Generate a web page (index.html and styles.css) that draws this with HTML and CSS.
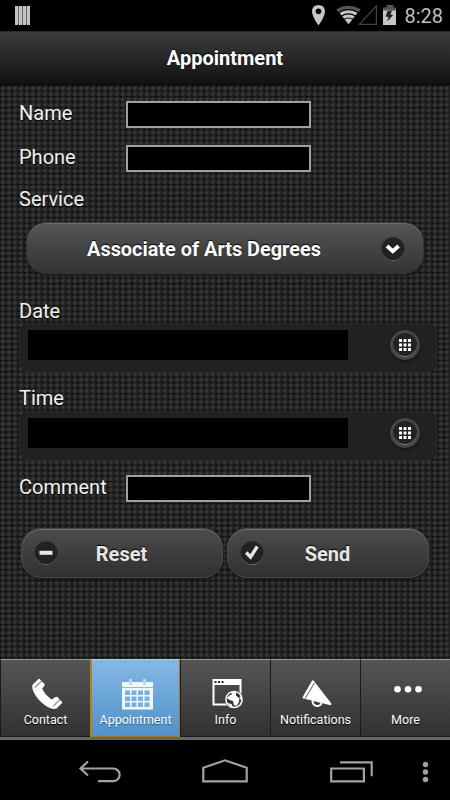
FILE: index.html
```html
<!DOCTYPE html>
<html lang="en">
<head>
  <meta charset="UTF-8">
  <meta name="viewport" content="width=device-width, initial-scale=1.0">
  <title>Appointment</title>
  <link rel="stylesheet" href="styles.css">
</head>
<body>
  <!-- Status bar -->
  <div class="status">
    <svg class="status-left" width="16" height="20" viewBox="0 0 16 20">
      <path fill="#6a6a6a" d="M0 .5h15v18H0z"/>
      <path fill="#c4c4c4" d="M0 0h3v19H0zM4 0h3v19H4zM8 0h3v19H8zM12 0h3v19h-3z"/>
    </svg>
    <svg class="status-icons" width="92" height="22" viewBox="0 0 92 22">
      <path fill="#c6c6c6" fill-rule="evenodd" d="M8.500 0C4.600 0 2 2.800 2 6.500c0 5 6.500 14 6.500 14s6.500-9 6.500-14C15 2.800 12.400 0 8.500 0zm0 3.400a2.800 2.800 0 1 1 0 5.600 2.800 2.800 0 0 1 0-5.600z"/>
      <path fill="#c6c6c6" d="M38.500 19.200 29 7.200q9.500-6 19 0z"/>
      <path fill="#555" d="M26.300 4.200q12.200-6.700 24.400 0l-2.300 3.300q-9.900-6-19.800 0z"/>
      <path fill="none" stroke="#000" stroke-width="1.200" d="M28.500 7.700q10-6 20 0M31.200 11.200q7.300-4.500 14.600 0M33.700 14.500q4.800-3 9.600 0"/>
      <path fill="none" stroke="#444" stroke-width="1.200" d="M66.400 1v18.400H49.300z"/>
      <path fill="#555" d="M76.500 0h7v2.500H86V6H73V2.500h3.500z"/>
      <path fill="#c6c6c6" d="M73 5.500h13V20H73z"/>
      <path fill="#222" d="m77.500 6 4.500-.5-1.500 4 2.700.4-6 6.500 1.300-4.500-3-.5z"/>
    </svg>
    <span class="clock">8:28</span>
  </div>

  <h1 class="header">Appointment</h1>

  <form class="form">
    <div class="row">
      <label for="name">Name</label>
      <input type="text" id="name">
    </div>
    <div class="row">
      <label for="phone">Phone</label>
      <input type="text" id="phone">
    </div>
    <label class="label-service">Service</label>
    <button type="button" class="button select">
      <span>Associate of Arts Degrees</span>
      <svg class="disc" width="24" height="24" viewBox="0 0 24 24">
        <circle cx="12" cy="12.700" r="11.200" fill="#8a8a8a"/>
        <circle cx="12" cy="11.800" r="11.500" fill="#222"/>
        <path d="m6 9 5.800 5.200L17.600 9" fill="none" stroke="#fff" stroke-width="3.800"/>
      </svg>
    </button>

    <label class="label-date">Date</label>
    <div class="picker">
      <input type="text">
      <button type="button" class="grid-button">
        <svg width="12" height="12" viewBox="0 0 12 12"><path fill="#fff" d="M0 0h3v3H0zM4.500 0h3v3h-3zM9 0h3v3H9zM0 4.500h3v3H0zM4.500 4.500h3v3h-3zM9 4.500h3v3H9zM0 9h3v3H0zM4.500 9h3v3h-3zM9 9h3v3H9z"/></svg>
      </button>
    </div>

    <label class="label-time">Time</label>
    <div class="picker">
      <input type="text">
      <button type="button" class="grid-button">
        <svg width="12" height="12" viewBox="0 0 12 12"><path fill="#fff" d="M0 0h3v3H0zM4.500 0h3v3h-3zM9 0h3v3H9zM0 4.500h3v3H0zM4.500 4.500h3v3h-3zM9 4.500h3v3H9zM0 9h3v3H0zM4.500 9h3v3h-3zM9 9h3v3H9z"/></svg>
      </button>
    </div>

    <div class="row row-comment">
      <label for="comment">Comment</label>
      <input type="text" id="comment">
    </div>

    <div class="actions">
      <button type="button" class="button action">
        <svg class="disc" width="24" height="24" viewBox="0 0 24 24">
          <circle cx="12" cy="12.700" r="11.200" fill="#8a8a8a"/>
          <circle cx="12" cy="11.800" r="11.500" fill="#222"/>
          <path fill="#e6e6e6" d="M5.500 9.800h13v4h-13z"/>
        </svg>
        <span>Reset</span>
      </button>
      <button type="button" class="button action">
        <svg class="disc" width="24" height="24" viewBox="0 0 24 24">
          <circle cx="12" cy="12.700" r="11.200" fill="#8a8a8a"/>
          <circle cx="12" cy="11.800" r="11.500" fill="#222"/>
          <path d="m6.200 11.500 4.300 4.500 6.800-10.500" fill="none" stroke="#e6e6e6" stroke-width="3.400"/>
        </svg>
        <span>Send</span>
      </button>
    </div>
  </form>

  <!-- Tabs -->
  <div class="tabs">
    <a class="tab">
      <svg width="34" height="34" viewBox="0 0 34 34">
        <path fill="#fff" d="M10 .5 3.500 6.800C2 11 6.500 19 12.500 24.500S24 32 27.500 30.500l6-6-5.300-5.700c-2 .2-3.500 1.200-5 2.700-4-2-8-6.500-10-11 1.300-1.200 2.300-2.600 2.500-4.300z"/>
        <path fill="none" stroke="#444" d="m12.800 2.800-7 6.700M31 21.500l-6.700 6.700"/>
      </svg>
      <span>Contact</span>
    </a>
    <a class="tab active">
      <svg width="34" height="34" viewBox="0 0 34 34">
        <path fill="#f2f7fc" d="M3 4h31v27.500H3z"/>
        <path fill="#bfdaf0" d="M10 1h3v6h-3zM24 1h3v6h-3z"/>
        <path stroke="#8fbde3" d="M3 9.500h31"/>
        <path fill="#79afdc" d="M6 12.500h5v4.500H6zM12.500 12.500h5v4.500h-5zM19 12.500h5v4.500h-5zM25.500 12.500h5v4.500h-5zM6 18.500h5v4.500H6zM12.500 18.500h5v4.500h-5zM19 18.500h5v4.500h-5zM25.500 18.500h5v4.500h-5zM6 24.500h5v4.500H6zM12.500 24.500h5v4.500h-5zM19 24.500h5v4.500h-5zM25.500 24.500h5v4.500h-5z"/>
      </svg>
      <span>Appointment</span>
    </a>
    <a class="tab">
      <svg width="34" height="34" viewBox="0 0 34 34">
        <path fill="#fff" fill-rule="evenodd" d="M3.500 1h29v26.500h-29zm2 6v18.500h25V7z"/>
        <path fill="#222" d="M5.500 3h2v2h-2zM9 3h2v2H9zM12.500 3h2v2h-2z"/>
        <circle cx="25" cy="21.500" r="9.300" fill="#444"/>
        <circle cx="25" cy="21.500" r="8.100" fill="#333" stroke="#fff" stroke-width="1.500"/>
        <path fill="#fff" d="m17.500 20 3.500-3 2-.5-1-2 3-1 2 1 0 3 3 2.500v4l-2 3.500h-3l-1-4.500-3.500-1zM18.500 25l4 1 1.500 3-2-.5zM31 17l1.500 4-2 1z"/>
      </svg>
      <span>Info</span>
    </a>
    <a class="tab">
      <svg width="34" height="34" viewBox="0 0 34 34">
        <path fill="none" stroke="#fff" stroke-width="2" d="M13.500 22.500c0 7 8.500 7 9 2"/>
        <path fill="#fff" d="M14.500 2.500 32 25c.8 1.500 0 2.500-1.500 2L4.500 20.500c-1-.2-1.200-1-.7-1.800l9.200-16c.4-.7 1-.7 1.500-.2z"/>
        <path stroke="#555" d="m15.500 5-9.500 15.500"/>
      </svg>
      <span>Notifications</span>
    </a>
    <a class="tab">
      <svg width="34" height="34" viewBox="0 0 34 34">
        <g fill="#fff"><circle cx="8.500" cy="11.300" r="3.300"/><circle cx="19" cy="11.300" r="3.300"/><circle cx="29.500" cy="11.300" r="3.300"/></g>
      </svg>
      <span>More</span>
    </a>
  </div>

  <!-- System navigation -->
  <div class="navbar">
    <svg width="450" height="60" viewBox="0 0 450 60">
      <g fill="none" stroke="#a2a2a2" stroke-width="2.200">
        <path d="m88 21.500-7.500 7 7.500 7M80.500 28.500h32.800a6.300 6.300 0 0 1 0 12.700H98"/>
        <path d="M203.300 41.300V27.800l21.700-7.500 21.700 7.500v13.500z"/>
        <path d="M331.200 28.500h32.700v12.800h-32.700zM340 22.300h31.700v14"/>
      </g>
      <g fill="#a2a2a2"><circle cx="425.500" cy="24.500" r="2.700"/><circle cx="425.500" cy="32" r="2.700"/><circle cx="425.500" cy="39.500" r="2.700"/></g>
    </svg>
  </div>
</body>
</html>
```

FILE: styles.css
```css
:root {
  --fg: #f2f2f2;
  --line: #a0a0a0;
  --panel: #222;
}
* { box-sizing: border-box; }
body {
  margin: 0;
  width: 450px;
  height: 800px;
  display: flex;
  flex-direction: column;
  overflow: hidden;
  background: #000;
  color: var(--fg);
  font-family: Roboto, sans-serif;
}
button, input {
  margin: 0;
  padding: 0;
  border: none;
  border-radius: 0;
  font-family: inherit;
  color: inherit;
}
svg { display: block; flex: none; }

.status {
  height: 31px;
  flex: none;
  display: flex;
  align-items: flex-start;
  padding: 5px 7px 0 15px;
}
.status-left { margin-top: 1px; }
.status-icons { margin-left: auto; }
.clock {
  margin-left: 2px;
  color: #bebebe;
  font-size: 20px;
  line-height: 23px;
}

.header {
  margin: 0;
  height: 54px;
  flex: none;
  border-top: 1px solid #2c2c2c;
  border-bottom: 1px solid #080808;
  background: linear-gradient(#3c3c3c, #111);
  color: #fff;
  font-size: 20px;
  font-weight: bold;
  line-height: 52px;
  text-align: center;
  text-shadow: 0 -1px 1px #000;
}

.form {
  flex: 1;
  min-height: 0;
  display: flex;
  flex-direction: column;
  padding: 16px 14px 0 19px;
  background:
    radial-gradient(circle at 45% 60%, #3c3c3c 0, #303030 36%, transparent 68%) 0 0 / 6px 5.500px,
    linear-gradient(135deg, #0a0a0a 15%, #1e1e1e 55%, #161616) 0 0 / 6px 5.500px;
}
.form label {
  font-size: 20px;
  line-height: 24px;
  text-shadow: 0 1px 1px #000;
}
.row {
  height: 27px;
  flex: none;
  display: flex;
  margin-bottom: 17px;
}
.row label { width: 107px; }
.row input {
  width: 185px;
  height: 27px;
  border: 2px solid var(--line);
  background: #000;
}
.label-service { margin-top: -2px; }

.button {
  display: flex;
  align-items: center;
  border: 1px solid #363636;
  border-radius: 20px;
  background: linear-gradient(#555, #333);
  box-shadow: 0 1px 3px #111, inset 0 1px 0 #6c6c6c;
  color: #fff;
  font-size: 20px;
  font-weight: bold;
  text-shadow: 0 -1px 1px #000;
}
.button span { flex: 1; text-align: center; }
.select {
  width: 398px;
  height: 52px;
  flex: none;
  margin: 11px 0 0 7px;
  padding: 2px 18px 0 0;
  font-size: 19.900px;
}

.label-date { margin-top: 25px; }
.label-time { margin-top: 13px; }
.picker {
  width: 418px;
  height: 50px;
  flex: none;
  display: flex;
  align-items: flex-start;
  padding: 6px 16px 0 9px;
  border: 1px solid #272727;
  border-radius: 9px;
  background: var(--panel);
}
.label-time + .picker { margin-top: 1px; }
.picker input {
  width: 320px;
  height: 30px;
  margin-left: -1px;
  background: #000;
}
.grid-button {
  width: 30px;
  height: 30px;
  display: flex;
  align-items: center;
  justify-content: center;
  margin-left: auto;
  border: 3px solid #454545;
  border-radius: 50%;
  background: #222;
  box-shadow: 0 1px 3px #111, inset 0 -1px 0 #888;
}

.row-comment { margin: 14px 0 0; }
.actions {
  display: flex;
  gap: 4px;
  margin: 26px 0 0 2px;
}
.action {
  width: 202px;
  height: 50px;
  border-color: #4a4a4a;
  background: linear-gradient(#4c4c4c, #303030);
  color: #e6e6e6;
  padding: 0 37px 0 12px;
}
.action span { padding-top: 2px; }

.tabs {
  height: 81px;
  flex: none;
  display: grid;
  grid-template-columns: repeat(5, 90px);
  border-bottom: 3px solid #666;
}
.tab {
  display: flex;
  flex-direction: column;
  align-items: center;
  padding-top: 18px;
  border: 1px solid #1b1b1b;
  border-top-color: #999;
  border-right: none;
  background: linear-gradient(#555, #313131);
  color: #fff;
  font-size: 12.500px;
  line-height: 16px;
  text-shadow: 0 1px 1px #000;
}
.tab.active {
  border: 1px solid #a97925;
  border-top-color: #b2cce2;
  border-left: 2px solid #b18312;
  background: linear-gradient(#85b8e5, #5091c8);
  text-shadow: 0 1px 1px #24587f;
}
.navbar {
  height: 60px;
  flex: none;
  background: #000;
}
```
